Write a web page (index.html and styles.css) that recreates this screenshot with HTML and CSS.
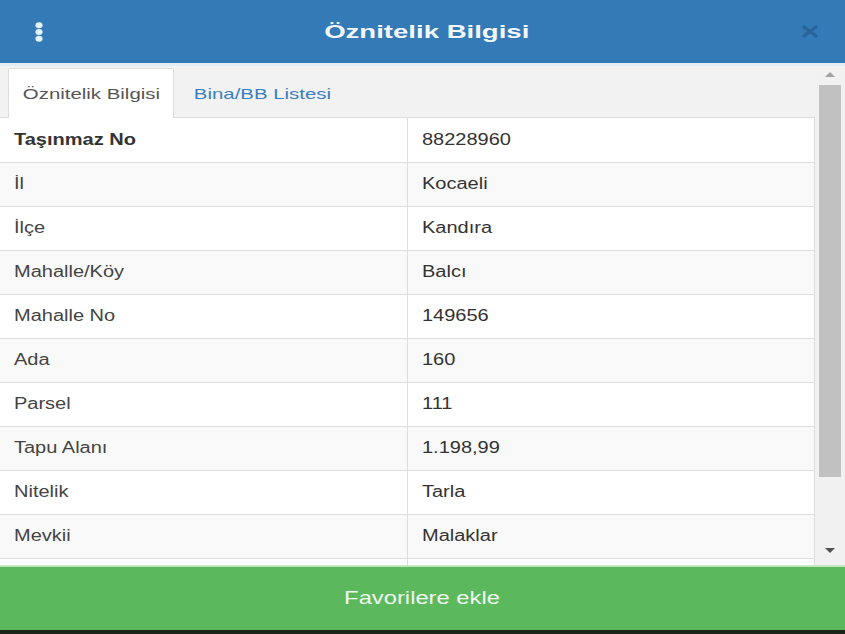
FILE: index.html
```html
<!DOCTYPE html>
<html lang="tr">
<head>
<meta charset="utf-8">
<title>Öznitelik Bilgisi</title>
<link rel="stylesheet" href="styles.css">
</head>
<body>
<div class="modal">
  <header class="head">
    <button class="icon-btn menu" aria-label="Menü">
      <svg width="8" height="20" viewBox="0 0 8 20"><ellipse cx="4" cy="3.2" rx="3.6" ry="3"/><ellipse cx="4" cy="10" rx="3.6" ry="3"/><ellipse cx="4" cy="16.8" rx="3.6" ry="3"/></svg>
    </button>
    <h1 class="title"><span class="s-title">Öznitelik Bilgisi</span></h1>
    <button class="icon-btn close" aria-label="Kapat">
      <svg width="18" height="13" viewBox="0 0 18 13"><path d="M3 2 L15 11 M15 2 L3 11"/></svg>
    </button>
  </header>
  <div class="body">
    <div class="content">
      <ul class="tabs">
        <li class="tab active"><span class="s-tab">Öznitelik Bilgisi</span></li>
        <li class="tab link"><span class="s-tab">Bina/BB Listesi</span></li>
      </ul>
      <table class="attrs">
        <colgroup><col class="c-label"><col class="c-value"></colgroup>
        <tbody>
          <tr class="plain"><td class="label strong"><span class="s-cell">Taşınmaz No</span></td><td><span class="s-cell">88228960</span></td></tr>
          <tr class="stripe"><td class="label"><span class="s-cell">İl</span></td><td><span class="s-cell">Kocaeli</span></td></tr>
          <tr class="plain"><td class="label"><span class="s-cell">İlçe</span></td><td><span class="s-cell">Kandıra</span></td></tr>
          <tr class="stripe"><td class="label"><span class="s-cell">Mahalle/Köy</span></td><td><span class="s-cell">Balcı</span></td></tr>
          <tr class="plain"><td class="label"><span class="s-cell">Mahalle No</span></td><td><span class="s-cell">149656</span></td></tr>
          <tr class="stripe"><td class="label"><span class="s-cell">Ada</span></td><td><span class="s-cell">160</span></td></tr>
          <tr class="plain"><td class="label"><span class="s-cell">Parsel</span></td><td><span class="s-cell">111</span></td></tr>
          <tr class="stripe"><td class="label"><span class="s-cell">Tapu Alanı</span></td><td><span class="s-cell">1.198,99</span></td></tr>
          <tr class="plain"><td class="label"><span class="s-cell">Nitelik</span></td><td><span class="s-cell">Tarla</span></td></tr>
          <tr class="stripe"><td class="label"><span class="s-cell">Mevkii</span></td><td><span class="s-cell">Malaklar</span></td></tr>
          <tr class="plain"><td class="label"></td><td></td></tr>
        </tbody>
      </table>
    </div>
    <div class="scrollbar">
      <div class="arrow-zone top"><span class="arrow up"></span></div>
      <div class="thumb"></div>
      <div class="rest"></div>
      <div class="arrow-zone bottom"><span class="arrow down"></span></div>
    </div>
  </div>
  <footer class="foot">
    <button class="fav"><span class="s-btn">Favorilere ekle</span></button>
  </footer>
</div>
</body>
</html>
```
FILE: styles.css
```css
* { box-sizing: border-box; }

body {
  margin: 0;
  background: #1c2417;
  font-family: "Liberation Sans", Arial, sans-serif;
}

.modal {
  width: 845px;
  display: flex;
  flex-direction: column;
}

/* header */
.head {
  height: 66px;
  background: #337ab7;
  border-bottom: 3px solid #e1ecf6;
  display: grid;
  grid-template-columns: 1fr auto 1fr;
  align-items: center;
  padding: 0 26px 0 35px;
}

.icon-btn {
  border: 0;
  background: none;
  padding: 0;
  display: flex;
}

.menu { justify-self: start; }
.menu svg { fill: #e2f1fb; }

.close { justify-self: end; }
.close svg path {
  stroke: #2a6398;
  stroke-width: 3.4;
  stroke-linecap: round;
  fill: none;
}

.title {
  margin: 0;
  font-size: 19px;
  font-weight: bold;
  color: #f2f8fc;
  text-align: center;
  line-height: 22px;
}

.s-title {
  display: inline-block;
  transform: scaleX(1.45);
  transform-origin: center;
}

/* body */
.body {
  height: 499px;
  display: flex;
  background: #f2f2f2;
  overflow: hidden;
}

.content {
  width: 815px;
  overflow: hidden;
}

.tabs {
  list-style: none;
  margin: 0;
  padding: 2px 0 0 8px;
  display: flex;
  border-bottom: 1px solid #ddd;
  height: 52px;
}

.tab {
  height: 50px;
  margin-bottom: -1px;
  display: flex;
  align-items: center;
  justify-content: center;
  font-size: 15px;
  border: 1px solid transparent;
  border-bottom: 0;
  border-radius: 2px 2px 0 0;
}

.tab.active {
  width: 166px;
  background: #fff;
  border-color: #ddd;
  color: #555;
}

.tab.link {
  width: 176px;
  color: #3a7ebf;
}

.s-tab {
  display: inline-block;
  transform: scaleX(1.36);
  transform-origin: center;
}

/* table */
.attrs {
  width: 815px;
  border-collapse: collapse;
  table-layout: fixed;
  background: #fff;
  border-right: 1px solid #ddd;
}

.c-label { width: 407px; }

.attrs td {
  height: 44px;
  padding: 0 14px;
  border-top: 1px solid #ddd;
  font-size: 16px;
  color: #333;
  vertical-align: middle;
  white-space: nowrap;
}

.attrs tr:first-child td { border-top: 0; }

.attrs td.label {
  border-right: 1px solid #ddd;
  color: #444;
}

.attrs td.strong {
  font-weight: bold;
  color: #333;
}

.attrs tr.stripe td { background: #f9f9f9; }

.s-cell {
  display: inline-block;
  transform: scaleX(1.25);
  transform-origin: left center;
}

/* scrollbar */
.scrollbar {
  width: 30px;
  display: flex;
  flex-direction: column;
  align-items: center;
  background: #f1f1f1;
}

.arrow-zone {
  height: 19px;
  width: 100%;
  display: flex;
  justify-content: center;
}

.arrow-zone.top { align-items: flex-start; padding-top: 6px; }
.arrow-zone.bottom { align-items: flex-start; padding-top: 2px; }

.arrow {
  width: 0;
  height: 0;
  border-left: 5px solid transparent;
  border-right: 5px solid transparent;
}

.arrow.up { border-bottom: 5px solid #a3a3a3; }
.arrow.down { border-top: 5px solid #505050; }

.thumb {
  width: 22px;
  height: 392px;
  background: #c1c1c1;
}

.rest { flex: 1; }

/* footer */
.foot { display: flex; }

.fav {
  width: 100%;
  height: 65px;
  border: 0;
  border-top: 2px solid #c4e6c4;
  background: #5cb85c;
  color: #eef8ee;
  font-family: inherit;
  font-size: 18px;
  padding: 0;
}

.s-btn {
  display: inline-block;
  transform: scaleX(1.32);
  transform-origin: center;
}
```
